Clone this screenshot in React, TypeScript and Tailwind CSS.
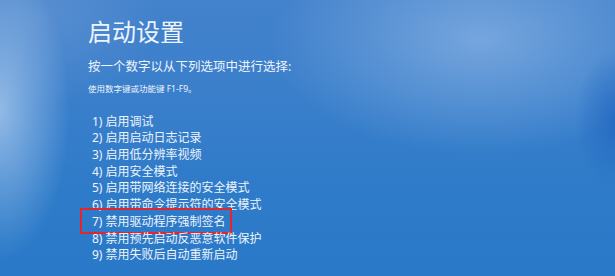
import React from "react";

const items = [
  "1) 启用调试",
  "2) 启用启动日志记录",
  "3) 启用低分辨率视频",
  "4) 启用安全模式",
  "5) 启用带网络连接的安全模式",
  "6) 启用带命令提示符的安全模式",
  "7) 禁用驱动程序强制签名",
  "8) 禁用预先启动反恶意软件保护",
  "9) 禁用失败后自动重新启动",
];

export default function App() {
  return (
    <div
      className="w-[615px] h-[276px] overflow-hidden bg-[#2c7bc9] bg-[image:radial-gradient(ellipse_40px_70px_at_615px_120px,rgba(30,100,190,0.7),rgba(30,100,190,0)),radial-gradient(ellipse_210px_115px_at_480px_40px,rgba(150,188,232,0.62),rgba(150,188,232,0)),radial-gradient(ellipse_70px_150px_at_0px_110px,rgba(175,205,238,0.75),rgba(175,205,238,0)),radial-gradient(ellipse_120px_90px_at_40px_15px,rgba(120,160,215,0.4),rgba(120,160,215,0)),linear-gradient(180deg,#4382cc_0%,#3a7fcb_35%,#2e7bc9_70%,#2979c8_100%)] text-[#eef4fb]"
      style={{ fontFamily: '"Noto Sans", "Noto Sans CJK SC", sans-serif' }}
    >
      <div className="flex flex-col pl-[88px] pt-[20px]">
        <h1 className="text-[24px] leading-[24px] font-normal">启动设置</h1>
        <p className="mt-[15px] text-[12.5px] leading-[16px]">按一个数字以从下列选项中进行选择:</p>
        <p className="mt-[9px] text-[8.5px] leading-[10px]">使用数字键或功能键 F1-F9。</p>
        <ol className="mt-[19.6px] flex flex-col pl-[4px] text-[12px] leading-[16.7px]">
          {items.map((t, i) => (
            <li key={i} className="relative">
              {t}
              {i === 6 && (
                <span className="absolute left-[-12px] top-[-6px] w-[152px] h-[26px] border-2 border-[#e3262b]" />
              )}
            </li>
          ))}
        </ol>
      </div>
    </div>
  );
}
